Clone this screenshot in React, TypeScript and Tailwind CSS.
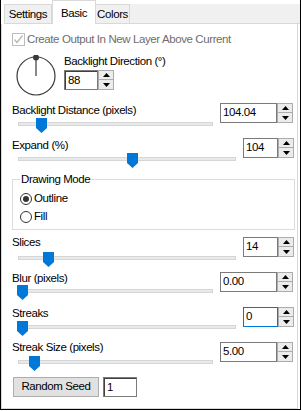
import React from "react";

function Tri({ down }: { down?: boolean }) {
  return (
    <svg width="7" height="4" viewBox="0 0 7 4">
      {down ? <polygon points="0,0 7,0 3.5,4" fill="#000" /> : <polygon points="0,4 7,4 3.5,0" fill="#000" />}
    </svg>
  );
}

function SpinButtons() {
  return (
    <div className="flex flex-col w-[16px] h-[20px]">
      <div className="h-[10px] border border-[#acacac] bg-[#ececec] flex items-center justify-center">
        <Tri />
      </div>
      <div className="h-[10px] border border-t-0 border-[#acacac] bg-[#ececec] flex items-center justify-center">
        <Tri down />
      </div>
    </div>
  );
}

function Spin({ value, wide, focused, cls }: { value: string; wide?: boolean; focused?: boolean; cls: string }) {
  return (
    <div className={"flex h-[20px] " + cls}>
      <div
        className={
          "h-[20px] border flex items-center pl-[2px] bg-white text-black " +
          (wide ? "w-[57px] " : "w-[35px] ") +
          (focused ? "border-[#0078d7]" : "border-[#7a7a7a]")
        }
      >
        {value}
      </div>
      <SpinButtons />
    </div>
  );
}

function Slider({ width, thumb, cls }: { width: string; thumb: number; cls: string }) {
  return (
    <div className={"relative h-[15px] ml-[6px] pt-[4px] " + width + " " + cls}>
      <div className="h-[4px] bg-[#e7eaea] border border-[#d6d6d6]" />
      <svg className="absolute top-0" style={{ left: thumb }} width="11" height="15" viewBox="0 0 11 15">
        <polygon points="0,0 11,0 11,10 5.5,15 0,10" fill="#0078d7" />
      </svg>
    </div>
  );
}

function Section({
  label,
  value,
  wide,
  focused,
  thumb,
  mt,
  gap,
  spinTop,
}: {
  label: string;
  value: string;
  wide?: boolean;
  focused?: boolean;
  thumb: number;
  mt: string;
  gap: string;
  spinTop: string;
}) {
  return (
    <div className={"flex " + mt}>
      <div className={"flex flex-col " + (wide ? "w-[201px]" : "w-[224px]")}>
        <div className="h-[15px] leading-[15px]">{label}</div>
        <Slider width={wide ? "w-[195px]" : "w-[218px]"} thumb={thumb} cls={gap} />
      </div>
      <Spin value={value} wide={wide} focused={focused} cls={"ml-[7px] " + spinTop} />
    </div>
  );
}

export default function App() {
  return (
    <div className="w-[302px] h-[411px] bg-white font-['Liberation_Sans',Arial,sans-serif] text-[11.5px] tracking-[-0.4px] text-black">
      <div className="w-[301px] h-[410px] border-l border-r border-b border-black flex flex-col">
        {/* tabs */}
        <div className="h-[24px] flex items-end pl-[3px] shrink-0">
          <div className="h-[20px] w-[48px] bg-[#f0f0f0] border border-[#d9d9d9] flex items-center justify-center pt-[1px]">
            Settings
          </div>
          <div className="h-[24px] w-[44px] bg-white border border-b-0 border-[#d9d9d9] flex items-start justify-center pt-[4px]">
            Basic
          </div>
          <div className="h-[20px] w-[34px] bg-[#f0f0f0] border border-l-0 border-[#d9d9d9] flex items-center justify-center pt-[1px]">
            Colors
          </div>
          <div className="h-[20px] flex-1 bg-[#f0f0f0] border-b border-[#d9d9d9]" />
        </div>
        {/* panel */}
        <div className="flex-1 mr-[2px] border-l border-r border-b border-[#d9d9d9] flex flex-col pl-[10px] pt-[8px]">
          {/* checkbox */}
          <div className="flex items-center h-[15px]">
            <div className="w-[13px] h-[13px] border border-[#bcbcbc] flex items-center justify-center">
              <svg width="11" height="11" viewBox="0 0 11 11">
                <polyline points="1.5,5.5 4,8.5 9.5,1.5" fill="none" stroke="#bcbcbc" strokeWidth="1.5" />
              </svg>
            </div>
            <span className="ml-[2px] text-[#6d6d6d] leading-[15px]">Create Output In New Layer Above Current</span>
          </div>
          {/* dial row */}
          <div className="flex mt-[7px] h-[43px]">
            <svg className="ml-[3px] mt-[1px]" width="42" height="42" viewBox="0 0 42 42">
              <circle cx="21" cy="21" r="19" fill="none" stroke="#3a3a3a" strokeWidth="1.2" />
              <line x1="21" y1="21" x2="21" y2="2" stroke="#3a3a3a" strokeWidth="1.2" />
              <circle cx="21" cy="2.5" r="3" fill="#3a3a3a" />
            </svg>
            <div className="flex flex-col ml-[7px]">
              <div className="h-[15px] leading-[15px]">Backlight Direction (°)</div>
              <div className="flex h-[20px] mt-[1px]">
                <div className="w-[34px] h-[20px] border border-[#7a7a7a] bg-white">
                  <div className="h-full border-l border-t border-[#404040] flex items-center pl-[2px]">88</div>
                </div>
                <SpinButtons />
              </div>
            </div>
          </div>
          <Section label="Backlight Distance (pixels)" value="104.04" wide thumb={18} mt="mt-[6px]" gap="mt-0" spinTop="mt-0" />
          <Section label="Expand (%)" value="104" thumb={109} mt="mt-[5px]" gap="mt-0" spinTop="mt-0" />
          {/* group */}
          <div className="relative mt-[11px] w-[283px] h-[51px] border border-[#dcdcdc] pl-[7px] pt-[11px] flex flex-col">
            <span className="absolute -top-[8px] left-[7px] bg-white px-[1px] leading-[15px]">Drawing Mode</span>
            <div className="flex items-center h-[15px]">
              <div className="w-[12px] h-[12px] rounded-full border border-[#333] flex items-center justify-center">
                <div className="w-[6px] h-[6px] rounded-full bg-[#333]" />
              </div>
              <span className="ml-[2px]">Outline</span>
            </div>
            <div className="flex items-center h-[15px] mt-[3px]">
              <div className="w-[12px] h-[12px] rounded-full border border-[#333]" />
              <span className="ml-[2px]">Fill</span>
            </div>
          </div>
          <Section label="Slices" value="14" thumb={25} mt="mt-[5px]" gap="mt-[2px]" spinTop="mt-[2px]" />
          <Section label="Blur (pixels)" value="0.00" wide thumb={-1} mt="mt-[4px]" gap="-mt-[1px]" spinTop="mt-[1px]" />
          <Section label="Streaks" value="0" focused thumb={-1} mt="mt-[6px]" gap="mt-0" spinTop="mt-[1px]" />
          <Section label="Streak Size (pixels)" value="5.00" wide thumb={11} mt="mt-[4px]" gap="mt-[1px]" spinTop="mt-[2px]" />
          {/* button row */}
          <div className="flex mt-[6px] ml-[1px]">
            <div className="w-[86px] h-[20px] bg-[#e1e1e1] border border-[#adadad] flex items-center justify-center">
              Random Seed
            </div>
            <div className="ml-[4px] w-[34px] h-[20px] border border-[#7a7a7a] bg-white">
              <div className="h-full border-l border-t border-[#404040] flex items-center pl-[2px]">1</div>
            </div>
          </div>
        </div>
      </div>
    </div>
  );
}
